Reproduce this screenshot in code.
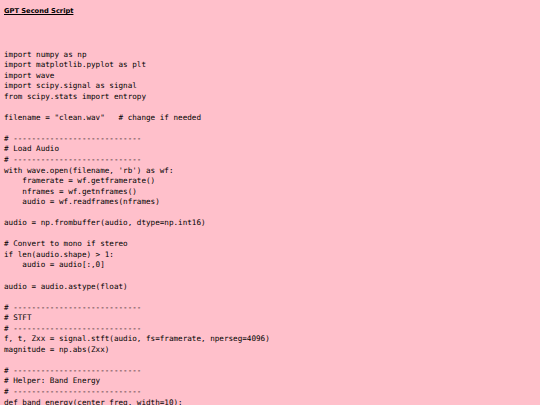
const code = `import numpy as np
import matplotlib.pyplot as plt
import wave
import scipy.signal as signal
from scipy.stats import entropy

filename = "clean.wav"   # change if needed

# ----------------------------
# Load Audio
# ----------------------------
with wave.open(filename, 'rb') as wf:
    framerate = wf.getframerate()
    nframes = wf.getnframes()
    audio = wf.readframes(nframes)

audio = np.frombuffer(audio, dtype=np.int16)

# Convert to mono if stereo
if len(audio.shape) > 1:
    audio = audio[:,0]

audio = audio.astype(float)

# ----------------------------
# STFT
# ----------------------------
f, t, Zxx = signal.stft(audio, fs=framerate, nperseg=4096)
magnitude = np.abs(Zxx)

# ----------------------------
# Helper: Band Energy
# ----------------------------
def band_energy(center_freq, width=10):`;

export default function App() {
  return (
    <div className="min-h-screen w-full overflow-hidden bg-[#ffc0cb] px-[4px] pt-[7px] text-black">
      <h1 className="font-['DejaVu_Sans',sans-serif] text-[6.7px] font-bold leading-[8px] underline">
        GPT Second Script
      </h1>
      <pre className="mt-[34.5px] font-['DejaVu_Sans_Mono',monospace] text-[7.62px] leading-[10.55px] whitespace-pre">
        {code}
      </pre>
    </div>
  );
}
